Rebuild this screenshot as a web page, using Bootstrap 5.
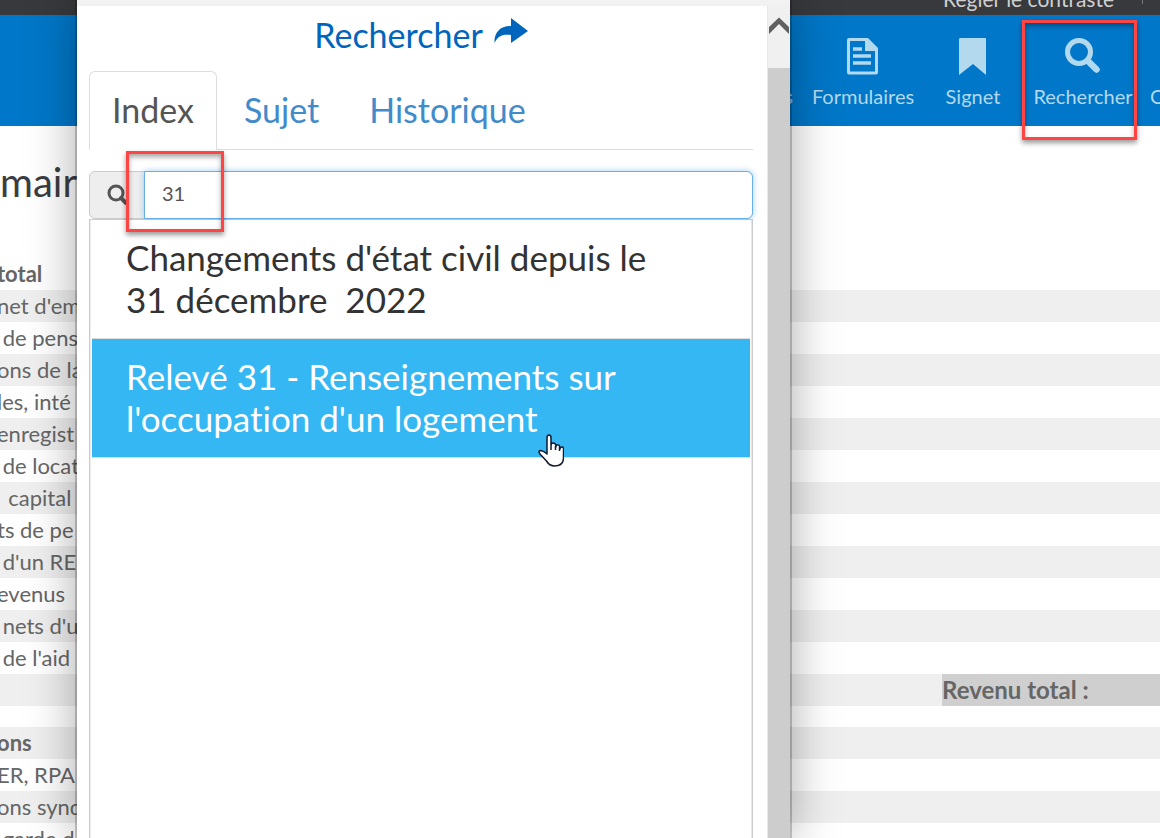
<!DOCTYPE html>
<html lang="fr">
<head>
<meta charset="utf-8">
<meta name="viewport" content="width=device-width, initial-scale=1">
<title>Rechercher</title>
<link href="https://cdn.jsdelivr.net/npm/bootstrap@5.3.0/dist/css/bootstrap.min.css" rel="stylesheet">
<style>
body{font-family:Lato,"Noto Sans",sans-serif;font-variant-ligatures:none;color:#666;font-size:22px;line-height:32px;background:#fff}
.util-bar{height:15px;background:#38393d;color:#d0d0d0;font-size:21px;line-height:32px}
.util-bar a{color:inherit}
.util-sep{border-left:1px solid #77787c;height:4px;margin:0 17px 0 28px}
.tool-bar{background:#0077c8;height:111px}
.tool{width:110px;padding:21px 0 0;border:0;background:none;color:#b3d9ee;font-size:20px;line-height:24px;white-space:nowrap}
.tool svg{display:block;margin:0 auto 8px;width:40px;height:40px}
.tool-prev{text-align:right;padding:69px 15px 0 0}
.tool-next{width:22px;padding:69px 0 0 12px;overflow:hidden;text-align:left}
.callout{position:absolute;border:3px solid #ff4444;box-shadow:0 3px 5px rgba(0,0,0,.4),inset 0 3px 5px rgba(0,0,0,.35);pointer-events:none;z-index:5}
.callout-tool{left:-6px;right:1px;top:5px;height:120px}
.callout-field{left:38px;width:98px;top:-20px;height:81px}
.page-title{font-size:40px;line-height:48px;color:#3c3d41;padding-top:32px;margin-bottom:52px}
.table-clip{margin-left:-3px}
.sums{width:100%;white-space:pre;table-layout:fixed}
.sums td,.sums th{height:32px;padding:0;overflow:hidden}
.sums .alt{background:#efefef}
.sums .gap td{height:21px}
.col-amount{width:218px}
.sums .sum-total{background:#cfcfcf;font-size:24px}
.search-window{position:absolute;top:0;bottom:0;left:77px;right:370px;background:#fff;box-shadow:0 0 0 2px rgba(0,0,0,.2),0 0 46px rgba(0,0,0,.35)}
.window-edge{height:6px;background:#f2f2f2}
.window-body{padding:0 14px 0 12px;min-width:0}
.window-title{font-size:34px;line-height:42px;color:#0065bd;padding-top:8px;margin-bottom:15px}
.window-title svg{width:34px;height:26px;margin:4px 0 0 11px}
.scroll-rail{width:23px;background:#f0f0f0;border-left:1px solid #e8e8e8}
.scroll-up{height:62px;border:0;background:none;padding:0}
.scroll-thumb{background:#cdcdcd}
.nav-tabs{border-color:#ddd}
.nav-tabs .nav-link{font-size:34px;line-height:42px;padding:17px 22px 18px;color:#428bca;margin-right:4px;border-radius:6px 6px 0 0}
.nav-tabs .nav-link.active{color:#555;border-color:#ddd #ddd #fff}
.find-row{margin-top:21px}
.find-row .input-group-text{width:56px;padding:0 0 0 17px;background:#eee;border-color:#ccc;border-radius:6px 0 0 6px}
.find-row .form-control{height:48px;padding:0 17px 4px;font-size:20px;color:#555;border-color:#66afe9;border-radius:0 6px 6px 0!important;box-shadow:0 0 6px rgba(102,175,233,.6)}
.find-row .callout{margin-left:0}
.results{border:1px solid #ccc;border-bottom:0;padding:0 2px;background:#fff;box-shadow:inset 1px 0 #eee,inset -1px 0 #e8e8e8}
.results .list-group-item{font-size:35px;line-height:42px;padding:16px 34px 18px;color:#333;border:0;border-bottom:1px solid #ddd;border-radius:0;white-space:pre-line}
.results .list-group-item.active{background:#34b7f3;color:#fff;margin:0}
.hand{position:absolute;left:446px;top:95px;width:26px;height:33px;z-index:4}
</style>
</head>
<body>
<div class="position-relative vh-100 overflow-hidden">
  <div class="util-bar d-flex align-items-start justify-content-end overflow-hidden">
    <a href="#" class="align-self-end text-decoration-none">Régler le contraste</a>
    <span class="util-sep"></span>
  </div>
  <nav class="tool-bar d-flex justify-content-end align-items-start">
    <button type="button" class="tool tool-prev">s</button>
    <button type="button" class="tool"><svg viewBox="0 0 40 40"><path fill="#b3d9ee" fill-rule="evenodd" d="M6 2h19l10 10v24.500q0 2-2 2H6q-2 0-2-2V4q0-2 2-2zm1 3v30.500h25V15H22V5z"/><path d="M10 13h9M10 20h18M10 27h18" stroke="#b3d9ee" stroke-width="3.500"/></svg>Formulaires</button>
    <button type="button" class="tool"><svg viewBox="0 0 40 40"><path fill="#b3d9ee" d="M8 2h24q1 0 1 1v36L20 28 6 39V3q0-1 2-1z"/></svg>Signet</button>
    <button type="button" class="tool position-relative"><svg viewBox="0 0 40 40"><circle cx="16" cy="16" r="11.500" fill="none" stroke="#b3d9ee" stroke-width="5"/><path d="M25 25l8.500 8.500" stroke="#b3d9ee" stroke-width="6.500" stroke-linecap="round"/></svg>Rechercher<span class="callout callout-tool"></span></button>
    <button type="button" class="tool tool-next">C</button>
  </nav>
  <main>
    <h1 class="page-title fw-normal">mair</h1>
    <div class="table-clip">
    <table class="sums">
      <colgroup><col><col class="col-amount"></colgroup>
      <tbody>
      <tr><th colspan="2">total</th></tr>
      <tr class="alt"><td>net d'em</td><td></td></tr>
      <tr><td>&nbsp;de pens</td><td></td></tr>
      <tr class="alt"><td>ons de la</td><td></td></tr>
      <tr><td>les, inté</td><td></td></tr>
      <tr class="alt"><td>enregist</td><td></td></tr>
      <tr><td>&nbsp;de locat</td><td></td></tr>
      <tr class="alt"><td>&nbsp; capital</td><td></td></tr>
      <tr><td>ts de pe</td><td></td></tr>
      <tr class="alt"><td>&nbsp;d'un RE</td><td></td></tr>
      <tr><td>evenus</td><td></td></tr>
      <tr class="alt"><td>&nbsp;nets d'u</td><td></td></tr>
      <tr><td>&nbsp;de l'aid</td><td></td></tr>
      <tr class="alt"><td></td><th class="sum-total">Revenu total :</th></tr>
      <tr class="gap"><td colspan="2"></td></tr>
      <tr class="alt"><th colspan="2">ons</th></tr>
      <tr><td>ER, RPA</td><td></td></tr>
      <tr class="alt"><td>ons synd</td><td></td></tr>
      <tr><td>&nbsp;garde d</td><td></td></tr>
      </tbody>
    </table>
    </div>
  </main>

  <section class="search-window d-flex flex-column" aria-label="Rechercher">
    <div class="window-edge flex-shrink-0"></div>
    <div class="d-flex flex-grow-1">
      <div class="window-body flex-grow-1 d-flex flex-column">
        <h2 class="window-title fw-normal d-flex justify-content-center align-items-start">Rechercher
          <svg viewBox="0 0 34 26"><path fill="#0065bd" d="M17 0l17 13-17 12v-8C8 16 4 18 .5 25 0 15 6 7.500 17 8z"/></svg></h2>
        <ul class="nav nav-tabs">
          <li class="nav-item"><a class="nav-link active" href="#">Index</a></li>
          <li class="nav-item"><a class="nav-link" href="#">Sujet</a></li>
          <li class="nav-item"><a class="nav-link" href="#">Historique</a></li>
        </ul>
        <div class="input-group find-row position-relative flex-nowrap">
          <label class="input-group-text" for="find"><svg width="22" height="22" viewBox="0 0 22 22" aria-label="Rechercher"><circle cx="9" cy="9" r="7" fill="none" stroke="#555" stroke-width="3"/><path d="M14 14l5 5" stroke="#555" stroke-width="4" stroke-linecap="round"/></svg></label>
          <input id="find" type="text" class="form-control" value="31">
          <span class="callout callout-field"></span>
        </div>
        <div class="results list-group flex-grow-1 rounded-0">
          <a href="#" class="list-group-item">Changements d'état civil depuis le
31 décembre&nbsp; 2022</a>
          <a href="#" class="list-group-item active position-relative">Relevé 31 - Renseignements sur
l'occupation d'un logement<svg class="hand" viewBox="0 0 26 33"><path fill="#fff" stroke="#111a30" stroke-width="1.500" stroke-linejoin="round" d="M9 18V4q0-3 2-3t2 3v8q0-3 2-3 3 0 3 4 0-3 2-2 2 0 2 4 0-2 2-2t1.500 4v7q0 8-9 8-5 0-8-5L2 20q-2-3 0-3.500 3 0 7 3.500zM13 11v5M17.500 12v4M21.500 13v4"/></svg></a>
        </div>
      </div>
      <div class="scroll-rail d-flex flex-column flex-shrink-0">
        <button type="button" class="scroll-up" aria-label="Défiler vers le haut"><svg class="d-block" width="22" height="62" viewBox="0 0 22 62"><path fill="#606060" d="M1 21v7L11 18l10 10v-7L11 11.500z"/></svg></button>
        <div class="scroll-thumb flex-grow-1"></div>
      </div>
    </div>
  </section>
</div>
<script src="https://cdn.jsdelivr.net/npm/bootstrap@5.3.0/dist/js/bootstrap.bundle.min.js"></script>
</body>
</html>
